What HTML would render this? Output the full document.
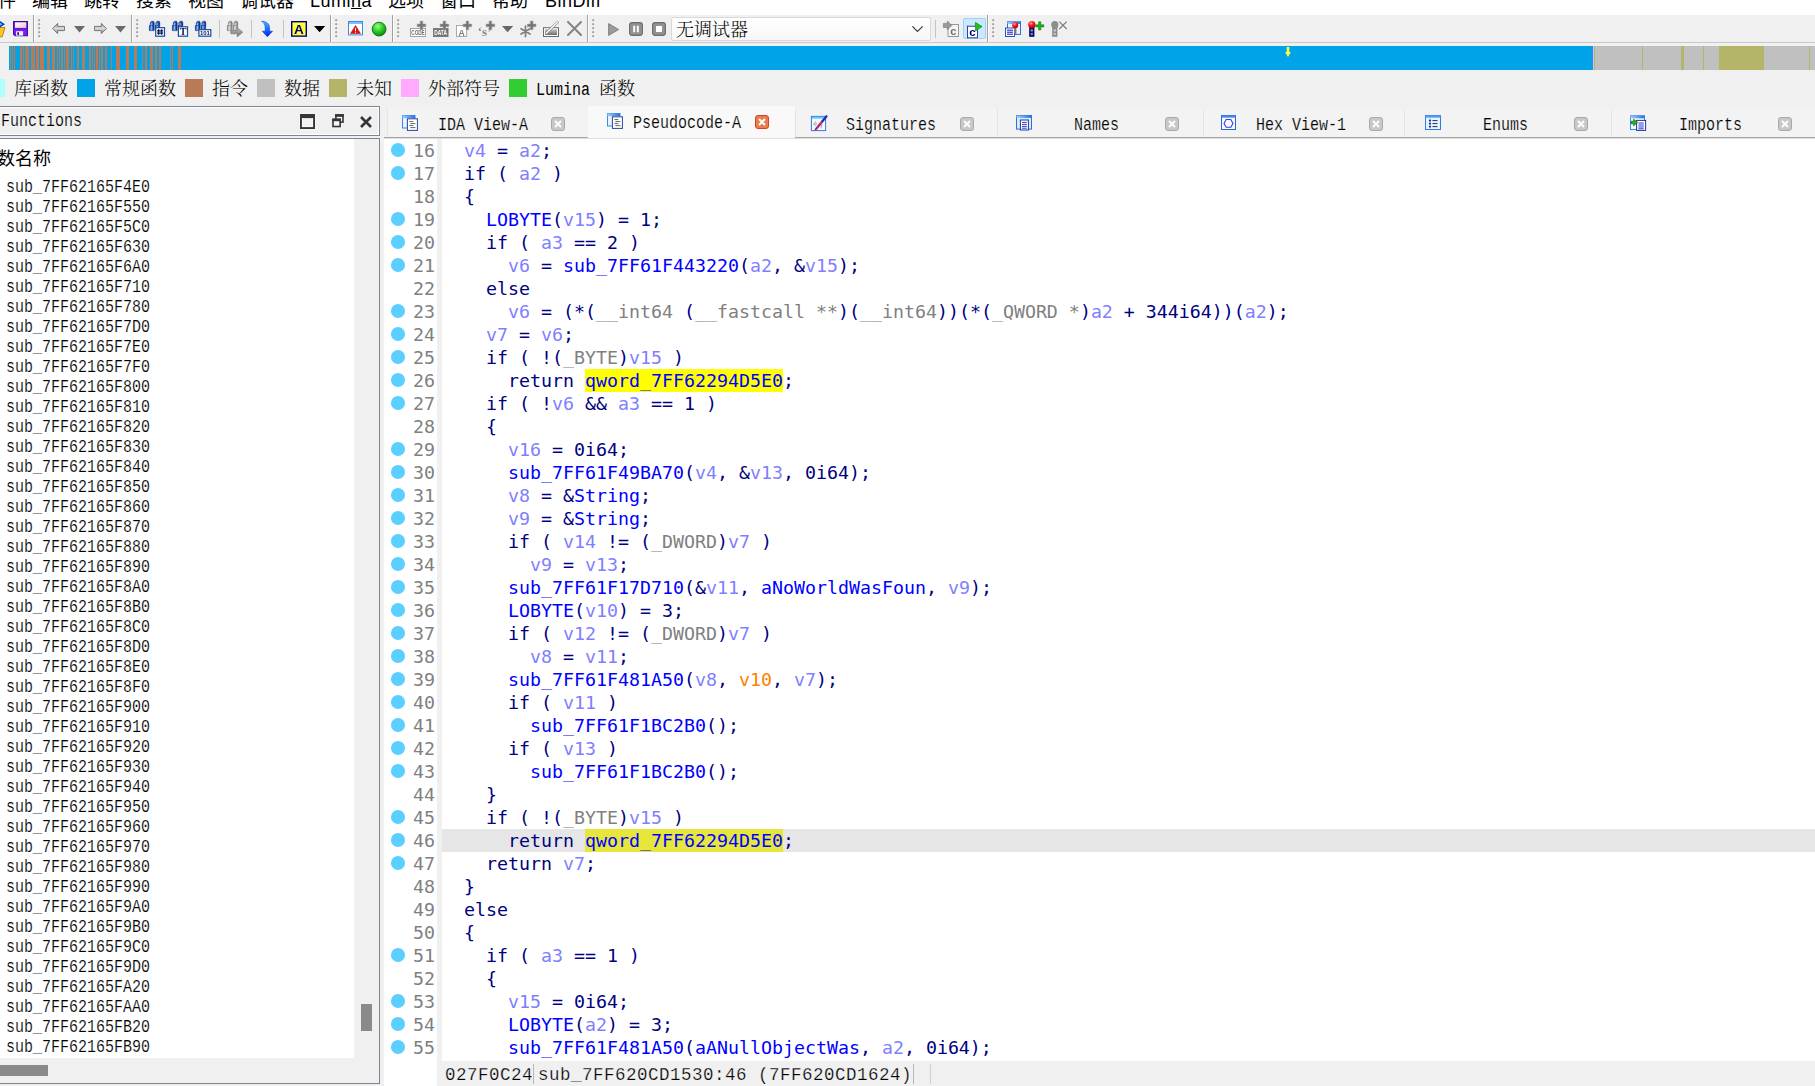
<!DOCTYPE html>
<html lang="zh-CN"><head><meta charset="utf-8"><title>IDA</title>
<style>
*{box-sizing:border-box;margin:0;padding:0}
html,body{width:1815px;height:1086px;overflow:hidden;background:#f0f0f0}
body{position:relative;font-family:"Liberation Mono","Noto Serif CJK SC",monospace;color:#000}
.abs{position:absolute}
/* menu */
#menu{position:absolute;left:0;top:0;width:1815px;height:15px;background:#fff;overflow:hidden}
#menu span.la{letter-spacing:.5px}
#menu span{position:absolute;top:-12px;font:18px/26px "Liberation Sans","Noto Sans CJK SC",sans-serif;white-space:nowrap;color:#000}
/* toolbar */
#tb{position:absolute;left:0;top:15px;width:1815px;height:28px;background:#f0f0f0}
.sepv{position:absolute;top:15px;width:1px;height:27px;background:#a0a0a0;box-shadow:1px 0 0 #fff}
.grip{position:absolute;top:19px;width:3px;height:19px;background:radial-gradient(circle at 1.3px 1.3px,#a9a9a9 0 1px,transparent 1.4px) 0 0/3px 4px repeat-y, radial-gradient(circle at 2px 2.2px,#fff 0 1px,transparent 1.4px) 0 0/3px 4px repeat-y}
.isep{position:absolute;top:20px;width:1px;height:18px;background:#c4c4c4}
svg{position:absolute;overflow:visible;will-change:transform}
/* nav */
#nav{position:absolute;left:8.5px;top:46px;width:1806.5px;height:24px;background:#00a2e8;overflow:hidden}
#nav span{position:absolute;top:0;height:24px;display:block}
/* legend */
.lg{position:absolute;top:79px;width:18px;height:18px}
.lt{position:absolute;top:78px;font:300 18px/24px "Liberation Mono","Noto Serif CJK SC",serif;white-space:nowrap;color:#000}
.sx{display:inline-block;transform:scaleX(.8333);transform-origin:0 50%;white-space:pre}
/* left panel */
#fh{position:absolute;left:-2px;top:106px;width:382px;height:30px;border:1px solid #7b8595;box-shadow:inset -1px -1px 0 #fff, inset 1px 1px 0 #fff;background:#f0f0f0}
#fl{position:absolute;left:-2px;top:138px;width:382px;height:946px;border:1px solid #7b8595;background:#fff;overflow:hidden}
.fn{-webkit-text-stroke:.18px #fff;position:absolute;left:6px;height:20px;font:18px/20px "Liberation Mono",monospace;white-space:pre;color:#000;transform:scaleX(.8333);transform-origin:0 50%}
/* tabs */
.tab{position:absolute;top:109px;height:28px;background:#f3f3f3;border-left:1px solid #e4e4e4}
.tab.act{top:106px;height:32px;background:#f9f9f9;border:0}
.tt{-webkit-text-stroke:.18px #f4f4f4;position:absolute;font:18px/22px "Liberation Mono",monospace;white-space:pre;color:#000;transform:scaleX(.8333);transform-origin:0 50%}
.cx{position:absolute;width:14px;height:14px;border-radius:3px;background:#c8c8c8;border:1px solid #a9a9a9}
.cx.red{background:#e67e50;border:1.5px solid #df3e24}
/* code */
#code{position:absolute;left:384px;top:138px;width:1431px;height:948px;background:#fff;overflow:hidden}
#gsep{position:absolute;left:437px;top:138px;width:5px;height:948px;background:#f0f0f0}
.ln{position:absolute;left:0;width:1815px;height:23px;font:18.27px/23px "DejaVu Sans Mono",monospace;white-space:pre}
.ln .d{position:absolute;left:391.4px;top:4.2px;width:14px;height:13.6px;border-radius:50%;background:#5bcfff;display:block}
.ln .n{position:absolute;left:413px;top:0;text-decoration:none;color:#808080}
.ln .c{position:absolute;left:442px;top:0;text-decoration:none;color:#000080}
.k{color:#000080}.f{color:#0000ff}.v{color:#8080ff}.t{color:#808080}.o{color:#ff8000}
.hl{background:#ffff00;padding:.9px 0}
.cur{background:#e6e6e6;left:442px !important;width:1373px !important}
/* status */
#st{position:absolute;left:442px;top:1061px;width:1373px;height:25px;background:#f0f0f0}
.stt{-webkit-text-stroke:.25px #f0f0f0;position:absolute;top:1063.5px;font:17.5px/22px "Liberation Mono",monospace;letter-spacing:.5px;white-space:pre;color:#000}
</style></head><body>
<div id="menu"><span style="left:-20px">文件</span><span style="left:32px">编辑</span><span style="left:84px">跳转</span><span style="left:136px">搜索</span><span style="left:188px">视图</span><span style="left:240px">调试器</span><span class="la" style="left:310px">Lumi<u>n</u>a</span><span style="left:388px">选项</span><span style="left:440px">窗口</span><span style="left:492px">帮助</span><span class="la" style="left:545px">BinDiff</span></div>
<div id="tb"></div><div class="abs" style="left:0;top:42px;width:1815px;height:1px;background:#c9c9c9"></div>
<div class="sepv" style="left:33px"></div><div class="sepv" style="left:131px"></div><div class="sepv" style="left:330px"></div><div class="sepv" style="left:392px"></div><div class="sepv" style="left:587px"></div><div class="sepv" style="left:987px"></div><div class="grip" style="left:38px"></div><div class="grip" style="left:136px"></div><div class="grip" style="left:335px"></div><div class="grip" style="left:397px"></div><div class="grip" style="left:592px"></div><div class="grip" style="left:992px"></div><div class="isep" style="left:219px"></div><div class="isep" style="left:251px"></div><div class="isep" style="left:283px"></div><div class="isep" style="left:935px"></div>
<svg width="0" height="0" style="left:0;top:0"><defs>
<linearGradient id="gArr" x1="0" y1="0" x2="0" y2="1"><stop offset="0" stop-color="#9a9a9a"/><stop offset=".5" stop-color="#dadada"/><stop offset="1" stop-color="#8a8a8a"/></linearGradient>
<linearGradient id="gBin" x1="0" y1="0" x2="1" y2="0"><stop offset="0" stop-color="#0a2a8a"/><stop offset=".4" stop-color="#7cc4ff"/><stop offset=".75" stop-color="#1c4fa8"/><stop offset="1" stop-color="#071d6a"/></linearGradient>
<linearGradient id="gBinG" x1="0" y1="0" x2="1" y2="0"><stop offset="0" stop-color="#8a8a8a"/><stop offset=".4" stop-color="#e0e0e0"/><stop offset=".75" stop-color="#a0a0a0"/><stop offset="1" stop-color="#7a7a7a"/></linearGradient>
<linearGradient id="gBlue" x1="0" y1="0" x2="0" y2="1"><stop offset="0" stop-color="#35c5ff"/><stop offset="1" stop-color="#0018ff"/></linearGradient>
<radialGradient id="gGreen" cx=".4" cy=".3" r=".7"><stop offset="0" stop-color="#9dff7a"/><stop offset=".5" stop-color="#2fd02f"/><stop offset="1" stop-color="#0c8a0c"/></radialGradient>
<radialGradient id="gRed" cx=".4" cy=".3" r=".7"><stop offset="0" stop-color="#ffb0a0"/><stop offset=".45" stop-color="#ff1a1a"/><stop offset="1" stop-color="#b00000"/></radialGradient>
<linearGradient id="gSave" x1="0" y1="0" x2="1" y2="1"><stop offset="0" stop-color="#fff"/><stop offset="1" stop-color="#ecc4c8"/></linearGradient>
<linearGradient id="gGray" x1="0" y1="0" x2="0" y2="1"><stop offset="0" stop-color="#c8c8c8"/><stop offset="1" stop-color="#6c6c6c"/></linearGradient>
<linearGradient id="gWin" x1="0" y1="0" x2="1" y2="0"><stop offset="0" stop-color="#9fd0ff"/><stop offset="1" stop-color="#2a6fe0"/></linearGradient>
</defs></svg>
<svg style="left:-11px;top:20px" width="16" height="17" viewBox="0 0 16 17"><path d="M1 7.5h15l-2.8 9.3H0z" fill="#f6c928" stroke="#b8860b" stroke-width="1"/><path d="M9.5 .8l5.2 3.4-5.2 3.4V5.6H5v-2.8h4.5z" fill="#28d8ff" stroke="#0b1fd0" stroke-width="1.3"/></svg>
<svg style="left:13px;top:21px" width="15" height="15.4" viewBox="0 0 15 15.4"><path d="M.6 .6h13.8v14.2H2.2L.6 13.2z" fill="#7a20f0" stroke="#3c0a9a" stroke-width="1.1"/><rect x="2" y="1.3" width="11.2" height="5.6" fill="url(#gSave)"/><rect x="1.2" y="7.4" width="12.6" height="1" fill="#5a10d0"/><rect x="3.1" y="10.2" width="7" height="4.4" fill="#f4f0ff"/><rect x="4.3" y="11.2" width="1.7" height="2.8" fill="#4a0aa0"/></svg>
<svg style="left:52px;top:23px" width="13" height="11" viewBox="0 0 13 11"><path d="M5.7 .4L.5 5.5l5.2 5.1V7.6h6.8V3.4H5.7z" fill="url(#gArr)" stroke="#6e6e6e" stroke-width=".9" stroke-linejoin="miter"/></svg>
<svg style="left:94px;top:23px" width="13" height="11" viewBox="0 0 13 11"><path d="M7.3 .4l5.2 5.1-5.2 5.1V7.6H.5V3.4h6.8z" fill="url(#gArr)" stroke="#6e6e6e" stroke-width=".9" stroke-linejoin="miter"/></svg>
<svg style="left:74px;top:26px" width="11" height="6.5" viewBox="0 0 11 6.5"><path d="M0 0h11L5.5 6.5z" fill="#6a6a6a"/></svg>
<svg style="left:115px;top:26px" width="11" height="6.5" viewBox="0 0 11 6.5"><path d="M0 0h11L5.5 6.5z" fill="#6a6a6a"/></svg>
<svg style="left:149px;top:21px" width="16.5" height="16" viewBox="0 0 16.5 16"><path d="M2.2 .3h2.5v1.3h.5v3h-.2v5h-4.6v-5h.9v-3h.9z" fill="url(#gBin)" stroke="#0a237a" stroke-width=".55"/><path d="M1.5 1.6h3.2M0.5 4.6h4.4" stroke="#0a237a" stroke-width=".5" opacity=".8"/><path d="M7.8 .3h2.5v1.3h.5v3h-.2v5h-4.6v-5h.9v-3h.9z" fill="url(#gBin)" stroke="#0a237a" stroke-width=".55"/><path d="M7.1 1.6h3.2M6.1 4.6h4.4" stroke="#0a237a" stroke-width=".5" opacity=".8"/><rect x="6.7" y="6.7" width="8.8" height="8.5" fill="#fff" stroke="#1c4a9a" stroke-width="1.2"/><path d="M9.6 8.2v5.6M12.6 8.2v5.6M8.1 9.8h6M8.1 12.2h6" stroke="#0a1a5a" stroke-width="1.3" fill="none"/></svg>
<svg style="left:172px;top:21px" width="16.5" height="16" viewBox="0 0 16.5 16"><path d="M2.2 .3h2.5v1.3h.5v3h-.2v5h-4.6v-5h.9v-3h.9z" fill="url(#gBin)" stroke="#0a237a" stroke-width=".55"/><path d="M1.5 1.6h3.2M0.5 4.6h4.4" stroke="#0a237a" stroke-width=".5" opacity=".8"/><path d="M7.8 .3h2.5v1.3h.5v3h-.2v5h-4.6v-5h.9v-3h.9z" fill="url(#gBin)" stroke="#0a237a" stroke-width=".55"/><path d="M7.1 1.6h3.2M6.1 4.6h4.4" stroke="#0a237a" stroke-width=".5" opacity=".8"/><rect x="6.4" y="5.8" width="9.1" height="9.4" fill="#fff" stroke="#1c4a9a" stroke-width="1.2"/><text x="11" y="14.2" font-family="Liberation Serif,serif" font-weight="bold" font-size="10" fill="#0a1a5a" text-anchor="middle">T</text></svg>
<svg style="left:195px;top:21px" width="16.5" height="16" viewBox="0 0 16.5 16"><path d="M2.2 .3h2.5v1.3h.5v3h-.2v5h-4.6v-5h.9v-3h.9z" fill="url(#gBin)" stroke="#0a237a" stroke-width=".55"/><path d="M1.5 1.6h3.2M0.5 4.6h4.4" stroke="#0a237a" stroke-width=".5" opacity=".8"/><path d="M7.8 .3h2.5v1.3h.5v3h-.2v5h-4.6v-5h.9v-3h.9z" fill="url(#gBin)" stroke="#0a237a" stroke-width=".55"/><path d="M7.1 1.6h3.2M6.1 4.6h4.4" stroke="#0a237a" stroke-width=".5" opacity=".8"/><rect x="3.9" y="8.7" width="11.9" height="6.5" fill="#fff" stroke="#1c4a9a" stroke-width="1.2"/><text x="9.9" y="14.2" font-family="Liberation Sans,sans-serif" font-weight="bold" font-size="6" fill="#0a1a5a" text-anchor="middle">101</text></svg>
<svg style="left:227px;top:21px" width="16.5" height="16" viewBox="0 0 16.5 16"><path d="M2.2 .3h2.5v1.3h.5v3h-.2v5h-4.6v-5h.9v-3h.9z" fill="url(#gBinG)" stroke="#6e6e6e" stroke-width=".55"/><path d="M1.5 1.6h3.2M0.5 4.6h4.4" stroke="#6e6e6e" stroke-width=".5" opacity=".8"/><path d="M7.8 .3h2.5v1.3h.5v3h-.2v5h-4.6v-5h.9v-3h.9z" fill="url(#gBinG)" stroke="#6e6e6e" stroke-width=".55"/><path d="M7.1 1.6h3.2M6.1 4.6h4.4" stroke="#6e6e6e" stroke-width=".5" opacity=".8"/><path d="M3.8 9.6h6.4V6.6l5.6 4.6-5.6 4.6v-3H3.8z" fill="url(#gGray)" stroke="#7c7c7c" stroke-width=".7"/></svg>
<svg style="left:261px;top:21px" width="12" height="16" viewBox="0 0 12 16"><path d="M.5 .3C5.5 .3 8.6 2.6 8.6 7v3.2h3L6.4 15.8 1.2 10.2h3V7C4.2 3.6 3 1.6.5 .3z" fill="url(#gBlue)" stroke="#0a2ad0" stroke-width=".5"/></svg>
<svg style="left:290.7px;top:21px" width="16" height="15.8" viewBox="0 0 16 15.8"><rect x=".7" y=".7" width="14.6" height="14.4" fill="#ffff3c" stroke="#00007e" stroke-width="1.4"/><text x="8" y="13" font-family="Liberation Sans,sans-serif" font-weight="bold" font-size="13.5" fill="#00007e" text-anchor="middle">A</text></svg>
<svg style="left:313.6px;top:26px" width="11.2" height="6.2" viewBox="0 0 11.2 6.2"><path d="M0 0h11.2L5.6 6.2z" fill="#000"/></svg>
<svg style="left:348px;top:21.3px" width="15" height="14.4" viewBox="0 0 15 14.4"><rect x=".5" y=".5" width="14" height="13.4" fill="#fff" stroke="#3c8ae8" stroke-width="1"/><rect x="1" y="1" width="13" height="2" fill="#7cc0ff"/><path d="M7.5 4.5l5 8h-10z" fill="#e01010" stroke="#a00000" stroke-width=".5"/><path d="M7.5 7v3M7.5 10.8v1" stroke="#fff" stroke-width="1.1"/></svg>
<svg style="left:371.8px;top:22px" width="14.2" height="14.2" viewBox="0 0 14.2 14.2"><circle cx="7.1" cy="7.1" r="6.9" fill="url(#gGreen)" stroke="#0a6a0a" stroke-width=".9"/></svg>
<svg style="left:410px;top:20px" width="16" height="17" viewBox="0 0 16 17"><rect x=".5" y="8.5" width="15" height="8" fill="#fff" stroke="#9a9a9a" stroke-width=".9"/><text x="8" y="15.3" font-family="Liberation Sans,sans-serif" font-weight="bold" font-size="6.6" fill="#6c6c6c" text-anchor="middle" textLength="13.4" lengthAdjust="spacingAndGlyphs">CODE</text><path d="M10.2 1.1h2.6v3h3v2.6h-3v3h-2.6v-3h-3v-2.6h3z" fill="#747474" stroke="#a0a0a0" stroke-width=".6"/></svg>
<svg style="left:433px;top:20px" width="16" height="17" viewBox="0 0 16 17"><rect x=".3" y="8.3" width="14.8" height="8.4" fill="#757575" stroke="#6a6a6a" stroke-width=".6"/><text x="7.6" y="15.2" font-family="Liberation Sans,sans-serif" font-weight="bold" font-size="6.6" fill="#fff" text-anchor="middle" textLength="12.6" lengthAdjust="spacingAndGlyphs">DATA</text><path d="M10.1 1.1h2.6v3h3v2.6h-3v3h-2.6v-3h-3v-2.6h3z" fill="#747474" stroke="#a0a0a0" stroke-width=".6"/></svg>
<svg style="left:456px;top:20px" width="17" height="17" viewBox="0 0 17 17"><rect x=".5" y="5.5" width="10.2" height="11" fill="#fff" stroke="#a2a2a2" stroke-width=".9"/><text x="5.6" y="15.6" font-family="Liberation Sans,sans-serif" font-weight="bold" font-size="8.6" fill="#7a7a7a" text-anchor="middle">A</text><path d="M10.1 1.1h2.6v3h3v2.6h-3v3h-2.6v-3h-3v-2.6h3z" fill="#747474" stroke="#a0a0a0" stroke-width=".6"/></svg>
<svg style="left:478px;top:20px" width="18" height="17" viewBox="0 0 18 17"><text x="6.6" y="16.4" font-family="Liberation Serif,serif" font-weight="bold" font-size="13" fill="#8a8a8a" text-anchor="middle">‘s’</text><path d="M11.1 1.1h2.6v3h3v2.6h-3v3h-2.6v-3h-3v-2.6h3z" fill="#747474" stroke="#a0a0a0" stroke-width=".6"/></svg>
<svg style="left:502px;top:26px" width="11.2" height="6.3" viewBox="0 0 11.2 6.3"><path d="M0 0h11.2L5.6 6.3z" fill="#66666c"/></svg>
<svg style="left:520px;top:20px" width="16" height="17" viewBox="0 0 16 17"><g stroke="#7e7e7e" stroke-width="1.7" stroke-linecap="round"><path d="M5.5 6.2v10.4M1 8.8l9 5.2M1 14l9-5.2"/></g><path d="M10.4 1.1h2.6v3h3v2.6h-3v3h-2.6v-3h-3v-2.6h3z" fill="#747474" stroke="#a0a0a0" stroke-width=".6"/></svg>
<svg style="left:543px;top:21px" width="16.5" height="16" viewBox="0 0 16.5 16"><rect x=".5" y="6.7" width="15" height="8.8" fill="#fff" stroke="#6a6a6a" stroke-width="1"/><rect x="2" y="8.2" width="12" height="5.8" fill="url(#gGray)"/><path d="M3.2 12.4L14.4 1.3" stroke="#8a8a8a" stroke-width="2.6" stroke-linecap="round"/><path d="M3.2 12.4L14.4 1.3" stroke="#fff" stroke-width="1.3" stroke-linecap="round"/></svg>
<svg style="left:567px;top:21px" width="15" height="15" viewBox="0 0 15 15"><path d="M1 1l13 13M14 1L1 14" stroke="#858585" stroke-width="2.1" stroke-linecap="round"/></svg>
<svg style="left:607.8px;top:23px" width="11" height="13" viewBox="0 0 11 13"><path d="M.6 .6l10 5.9-10 5.9z" fill="#9b9b9b" stroke="#7a7a7a" stroke-width=".9" stroke-linejoin="round"/></svg>
<svg style="left:629px;top:22px" width="14" height="14" viewBox="0 0 14 14"><rect x=".6" y=".6" width="12.8" height="12.8" rx="2.6" fill="#929292" stroke="#6c6c6c" stroke-width="1.1"/><path d="M5.2 3.8v6.4M8.8 3.8v6.4" stroke="#fff" stroke-width="1.9"/></svg>
<svg style="left:652px;top:22px" width="14" height="14" viewBox="0 0 14 14"><rect x=".6" y=".6" width="12.8" height="12.8" rx="2.6" fill="#929292" stroke="#6c6c6c" stroke-width="1.1"/><rect x="4" y="4" width="6" height="6" fill="#fff"/></svg>
<div class="abs" style="left:671px;top:17px;width:260px;height:24px;border:1px solid #d9d9d9;border-radius:2px;background:linear-gradient(#fff,#f7f7f7)"></div><div class="abs" style="left:676px;top:19.5px;font:300 18px/23px 'Liberation Mono','Noto Serif CJK SC',serif;white-space:nowrap">无调试器</div><svg style="left:912px;top:26px" width="11" height="6" viewBox="0 0 11 6"><path d="M.4 .4l5.1 5 5.1-5" fill="none" stroke="#3c3c3c" stroke-width="1.25"/></svg>
<svg style="left:943px;top:21px" width="16" height="16" viewBox="0 0 16 16"><rect x="5" y="3.5" width="10.5" height="12" fill="#f4f4f4" stroke="#8e8e8e" stroke-width=".9"/><text x="10.4" y="13.8" font-family="Liberation Sans,sans-serif" font-weight="bold" font-size="11" fill="#6f6f6f" text-anchor="middle">c</text><path d="M.4 2.4h4V0l4.4 4.4L4.4 8.8V6.4h-4z" fill="#9a9a9a" stroke="#707070" stroke-width=".6"/></svg>
<div class="abs" style="left:963px;top:18px;width:23px;height:21px;border:1px solid #99d1ff;border-radius:2px;background:#cce8ff"></div><svg style="left:967px;top:21.5px" width="16" height="16.5" viewBox="0 0 16 16.5"><rect x=".5" y="4.2" width="10" height="11.6" fill="#fff" stroke="#1c2e9a" stroke-width=".9"/><text x="5.4" y="14" font-family="Liberation Sans,sans-serif" font-weight="bold" font-size="11.5" fill="#00007e" text-anchor="middle">c</text><path d="M8.4 .3l6.8 4.3-6.8 4.3z" fill="#1fbf1f" stroke="#0a8a0a" stroke-width=".6"/></svg>
<svg style="left:1005px;top:21px" width="16" height="16" viewBox="0 0 16 16"><rect x="2.5" y=".8" width="13" height="12.6" fill="#eaf4ff" stroke="#2a6fe0" stroke-width="1"/><rect x="2.5" y=".8" width="13" height="2.2" fill="url(#gWin)"/><rect x=".5" y="7" width="9" height="8.5" fill="#fff" stroke="#1c3eb0" stroke-width=".9"/><path d="M2 9.2h6M2 11.2h6M2 13.2h6" stroke="#1010c0" stroke-width="1"/><rect x="9" y="6" width="2.4" height="7" fill="#7a7a7a"/><circle cx="10.2" cy="4.3" r="3" fill="url(#gRed)"/></svg>
<svg style="left:1028px;top:21px" width="16" height="16" viewBox="0 0 16 16"><rect x="1.2" y="6" width="5.2" height="9.8" fill="#00007a"/><circle cx="3.8" cy="9.4" r="1.3" fill="#8a8a8a"/><circle cx="3.8" cy="13" r="1.3" fill="#8a8a8a"/><circle cx="3.8" cy="3.7" r="3.6" fill="url(#gRed)"/><path d="M10.6 .8h2.2v3h3v2.2h-3v3h-2.2v-3h-3V3.8h3z" fill="#18b418" stroke="#0a6a0a" stroke-width=".5"/></svg>
<svg style="left:1051px;top:21px" width="16.5" height="16" viewBox="0 0 16.5 16"><rect x="1.2" y="6" width="5.2" height="9.8" fill="#8a8a8a"/><circle cx="3.8" cy="9.4" r="1.3" fill="#c4c4c4"/><circle cx="3.8" cy="13" r="1.3" fill="#c4c4c4"/><circle cx="3.8" cy="3.7" r="3.6" fill="#8e8e8e"/><path d="M8.3 .6l7.4 7.4M15.7 .6L8.3 8" stroke="#7a7a7a" stroke-width="1.1"/></svg>
<div id="nav"><span style="left:1.4px;width:1.1px;background:#b97a57"></span><span style="left:3.6px;width:0.8px;background:#b97a57"></span><span style="left:5.2px;width:1.1px;background:#b97a57"></span><span style="left:11.0px;width:0.9px;background:#b97a57"></span><span style="left:12.7px;width:0.9px;background:#b97a57"></span><span style="left:14.6px;width:0.8px;background:#b97a57"></span><span style="left:16.0px;width:0.8px;background:#b97a57"></span><span style="left:17.1px;width:3.7px;background:#b97a57"></span><span style="left:22.0px;width:4.0px;background:#b97a57"></span><span style="left:27.0px;width:3.0px;background:#b97a57"></span><span style="left:31.9px;width:4.0px;background:#b97a57"></span><span style="left:38.1px;width:3.7px;background:#b97a57"></span><span style="left:43.2px;width:3.6px;background:#b97a57"></span><span style="left:48.7px;width:0.8px;background:#b97a57"></span><span style="left:50.4px;width:0.8px;background:#b97a57"></span><span style="left:52.1px;width:0.8px;background:#b97a57"></span><span style="left:53.7px;width:0.9px;background:#b97a57"></span><span style="left:55.4px;width:0.8px;background:#b97a57"></span><span style="left:57.9px;width:3.0px;background:#b97a57"></span><span style="left:62.5px;width:0.9px;background:#b97a57"></span><span style="left:64.9px;width:1.1px;background:#b97a57"></span><span style="left:68.0px;width:2.9px;background:#b97a57"></span><span style="left:73.0px;width:3.0px;background:#b97a57"></span><span style="left:80.2px;width:0.9px;background:#b97a57"></span><span style="left:81.8px;width:0.8px;background:#b97a57"></span><span style="left:83.5px;width:0.9px;background:#b97a57"></span><span style="left:85.1px;width:0.6px;background:#b97a57"></span><span style="left:87.0px;width:2.0px;background:#b97a57"></span><span style="left:90.6px;width:0.8px;background:#b97a57"></span><span style="left:92.8px;width:2.2px;background:#b97a57"></span><span style="left:96.9px;width:2.0px;background:#b97a57"></span><span style="left:102.0px;width:1.9px;background:#b97a57"></span><span style="left:107.2px;width:4.7px;background:#b97a57"></span><span style="left:117.1px;width:3.9px;background:#b97a57"></span><span style="left:125.1px;width:3.7px;background:#b97a57"></span><span style="left:133.0px;width:1.9px;background:#b97a57"></span><span style="left:136.9px;width:2.0px;background:#b97a57"></span><span style="left:141.0px;width:3.1px;background:#b97a57"></span><span style="left:146.8px;width:2.2px;background:#b97a57"></span><span style="left:150.9px;width:2.0px;background:#b97a57"></span><span style="left:161.1px;width:1.1px;background:#b97a57"></span><span style="left:163.9px;width:1.1px;background:#b97a57"></span><span style="left:169.1px;width:3.9px;background:#b97a57"></span><span style="left:1584.5px;width:232px;background:#c0c0c0"></span><span style="left:1584.5px;width:1px;background:#ffaaff"></span><span style="left:1585.5px;width:1px;background:#b5b56a"></span><span style="left:1633.5px;width:1.0px;background:#b5b56a"></span><span style="left:1672.0px;width:3.5px;background:#b5b56a"></span><span style="left:1694.0px;width:1.0px;background:#b5b56a"></span><span style="left:1710.5px;width:45.0px;background:#b5b56a"></span><span style="left:1800.5px;width:1.0px;background:#b5b56a"></span></div><svg style="left:1284.5px;top:47px" width="6" height="10" viewBox="0 0 6 10"><path d="M1.7 0h2.6v5H6L3 10 0 5h1.7z" fill="#ffff40"/></svg>
<div class="lg" style="left:-13px;background:#b0ffff"></div><div class="lt" style="left:14px">库函数</div><div class="lg" style="left:77px;background:#00a2e8"></div><div class="lt" style="left:104px">常规函数</div><div class="lg" style="left:185px;background:#b97a57"></div><div class="lt" style="left:212px">指令</div><div class="lg" style="left:257px;background:#c0c0c0"></div><div class="lt" style="left:284px">数据</div><div class="lg" style="left:329px;background:#b5b56a"></div><div class="lt" style="left:356px">未知</div><div class="lg" style="left:401px;background:#ffaaff"></div><div class="lt" style="left:428px">外部符号</div><div class="lg" style="left:509px;background:#32cd32"></div><div class="lt" style="left:536px"><span class="sx">Lumina </span></div><div class="lt" style="left:599px">函数</div>
<div id="fh"></div><div class="tt" style="left:1px;top:110px">Functions</div><svg style="left:300px;top:114px" width="15" height="15" viewBox="0 0 15 15"><rect x="-.5" y="-.5" width="16" height="16" fill="#fff" opacity=".7"/><rect x="1" y="1" width="13" height="13" fill="#f2f2f2" stroke="#333538" stroke-width="2"/><rect x="0" y="0" width="15" height="4.4" fill="#333538"/><rect x="2.2" y="4.6" width="10.6" height="8.2" fill="none" stroke="#fff" stroke-width=".6"/></svg>
<svg style="left:332px;top:114px" width="12" height="13.5" viewBox="0 0 12 13.5"><rect x="3.9" y="1" width="7.1" height="7.1" fill="#f2f2f2" stroke="#333538" stroke-width="1.6"/><rect x="3.1" y=".2" width="8.7" height="2.6" fill="#333538"/><rect x="1" y="5.4" width="7.1" height="7.1" fill="#f8f8f8" stroke="#333538" stroke-width="1.6"/><rect x=".2" y="4.6" width="8.7" height="2.6" fill="#333538"/></svg>
<svg style="left:359.5px;top:115.5px" width="12" height="12" viewBox="0 0 12 12"><path d="M1 1l10 10M11 1L1 11" stroke="#333538" stroke-width="2.6"/></svg>
<div id="fl"><div class="abs" style="left:355px;top:0;width:25px;height:919px;background:#f0f0f0"></div><div class="abs" style="left:0;top:919px;width:380px;height:26px;background:#f0f0f0"></div><div class="abs" style="left:362px;top:865px;width:11px;height:27px;background:#8a8a8a"></div><div class="abs" style="left:0;top:926px;width:49px;height:11px;background:#8a8a8a"></div></div>
<div class="abs" style="left:-21px;top:146px;font:18px/26px 'Liberation Sans','Noto Sans CJK SC',sans-serif;white-space:nowrap">函数名称</div>
<div class="fn" style="top:177px">sub_7FF62165F4E0</div><div class="fn" style="top:197px">sub_7FF62165F550</div><div class="fn" style="top:217px">sub_7FF62165F5C0</div><div class="fn" style="top:237px">sub_7FF62165F630</div><div class="fn" style="top:257px">sub_7FF62165F6A0</div><div class="fn" style="top:277px">sub_7FF62165F710</div><div class="fn" style="top:297px">sub_7FF62165F780</div><div class="fn" style="top:317px">sub_7FF62165F7D0</div><div class="fn" style="top:337px">sub_7FF62165F7E0</div><div class="fn" style="top:357px">sub_7FF62165F7F0</div><div class="fn" style="top:377px">sub_7FF62165F800</div><div class="fn" style="top:397px">sub_7FF62165F810</div><div class="fn" style="top:417px">sub_7FF62165F820</div><div class="fn" style="top:437px">sub_7FF62165F830</div><div class="fn" style="top:457px">sub_7FF62165F840</div><div class="fn" style="top:477px">sub_7FF62165F850</div><div class="fn" style="top:497px">sub_7FF62165F860</div><div class="fn" style="top:517px">sub_7FF62165F870</div><div class="fn" style="top:537px">sub_7FF62165F880</div><div class="fn" style="top:557px">sub_7FF62165F890</div><div class="fn" style="top:577px">sub_7FF62165F8A0</div><div class="fn" style="top:597px">sub_7FF62165F8B0</div><div class="fn" style="top:617px">sub_7FF62165F8C0</div><div class="fn" style="top:637px">sub_7FF62165F8D0</div><div class="fn" style="top:657px">sub_7FF62165F8E0</div><div class="fn" style="top:677px">sub_7FF62165F8F0</div><div class="fn" style="top:697px">sub_7FF62165F900</div><div class="fn" style="top:717px">sub_7FF62165F910</div><div class="fn" style="top:737px">sub_7FF62165F920</div><div class="fn" style="top:757px">sub_7FF62165F930</div><div class="fn" style="top:777px">sub_7FF62165F940</div><div class="fn" style="top:797px">sub_7FF62165F950</div><div class="fn" style="top:817px">sub_7FF62165F960</div><div class="fn" style="top:837px">sub_7FF62165F970</div><div class="fn" style="top:857px">sub_7FF62165F980</div><div class="fn" style="top:877px">sub_7FF62165F990</div><div class="fn" style="top:897px">sub_7FF62165F9A0</div><div class="fn" style="top:917px">sub_7FF62165F9B0</div><div class="fn" style="top:937px">sub_7FF62165F9C0</div><div class="fn" style="top:957px">sub_7FF62165F9D0</div><div class="fn" style="top:977px">sub_7FF62165FA20</div><div class="fn" style="top:997px">sub_7FF62165FAA0</div><div class="fn" style="top:1017px">sub_7FF62165FB20</div><div class="fn" style="top:1037px">sub_7FF62165FB90</div>
<div class="abs" style="left:384px;top:137px;width:1431px;height:1px;background:#a6a6a6"></div><div class="abs" style="left:384px;top:138px;width:1431px;height:1px;background:#dedede;z-index:2"></div><div class="tab" style="left:386.5px;width:201px"></div><div class="tt" style="left:438px;top:114px">IDA View-A</div><div class="cx" style="left:551px;top:117px"></div><svg style="left:554px;top:120px" width="8" height="8" viewBox="0 0 8 8"><path d="M1 1l6 6M7 1L1 7" stroke="#fff" stroke-width="1.9"/></svg>
<svg style="left:402px;top:115px" width="16" height="16" viewBox="0 0 16 16"><rect x=".5" y=".5" width="12.5" height="12.5" fill="#e8f3ff" stroke="#3b8af0" stroke-width="1"/><rect x=".5" y=".5" width="12.5" height="2.6" fill="url(#gWin)"/><rect x="5.4" y="3.8" width="10" height="11.6" fill="#fff" stroke="#24489a" stroke-width="1"/><path d="M7.4 6.6h4M8.4 8.6h5M7.4 10.6h4M8.4 12.6h5" stroke="#555" stroke-width=".9"/></svg>
<div class="tab act" style="left:587.5px;width:207px"></div><div class="tt" style="left:633px;top:112px">Pseudocode-A</div><div class="cx red" style="left:755px;top:115px"></div><svg style="left:758px;top:118px" width="8" height="8" viewBox="0 0 8 8"><path d="M1 1l6 6M7 1L1 7" stroke="#fff" stroke-width="1.9"/></svg>
<svg style="left:607px;top:112.5px" width="16" height="16" viewBox="0 0 16 16"><rect x=".5" y=".5" width="12.5" height="12.5" fill="#e8f3ff" stroke="#3b8af0" stroke-width="1"/><rect x=".5" y=".5" width="12.5" height="2.6" fill="url(#gWin)"/><rect x="5.4" y="3.8" width="10" height="11.6" fill="#fff" stroke="#24489a" stroke-width="1"/><path d="M7.4 6.6h4M8.4 8.6h5M7.4 10.6h4M8.4 12.6h5" stroke="#555" stroke-width=".9"/></svg>
<div class="tab" style="left:794.5px;width:202.5px"></div><div class="tt" style="left:846px;top:114px">Signatures</div><div class="cx" style="left:959.5px;top:117px"></div><svg style="left:962.5px;top:120px" width="8" height="8" viewBox="0 0 8 8"><path d="M1 1l6 6M7 1L1 7" stroke="#fff" stroke-width="1.9"/></svg>
<svg style="left:810px;top:115px" width="17.5" height="16.5" viewBox="0 0 17.5 16.5"><rect x="1.4" y="1.4" width="14.2" height="14.2" fill="#f6fdff" stroke="#2f78e8" stroke-width="1"/><rect x="1.9" y="1.9" width="13.2" height="1.8" fill="#6ccaff"/><path d="M3.6 9.8c.2-3 2.6-3.4 2.6-1.2s-1.8 2.6-1.6.4M12 9l-1.2 4.5" fill="none" stroke="#8a8a8a" stroke-width=".8"/><path d="M5.2 13.6L11.4 6l1.5 1.2-6.2 7.6-1.9.6z" fill="#c4207c" stroke="#7a1050" stroke-width=".4"/><path d="M11.4 6l4.5-5.5c.8-.4 1.8.4 1.5 1.2L12.9 7.2z" fill="#2030b8" stroke="#101a80" stroke-width=".4"/></svg>
<div class="tab" style="left:997px;width:205.5px"></div><div class="tt" style="left:1073.5px;top:114px">Names</div><div class="cx" style="left:1165px;top:117px"></div><svg style="left:1168px;top:120px" width="8" height="8" viewBox="0 0 8 8"><path d="M1 1l6 6M7 1L1 7" stroke="#fff" stroke-width="1.9"/></svg>
<svg style="left:1016px;top:115px" width="16" height="16" viewBox="0 0 16 16"><rect x=".5" y=".5" width="15" height="13.6" fill="#d8ecff" stroke="#2f6ee0" stroke-width="1"/><rect x=".5" y=".5" width="15" height="2.4" fill="url(#gWin)"/><rect x="4.4" y="5" width="8" height="10" fill="#fff" stroke="#1c3a9a" stroke-width="1"/><path d="M6 7.4h4.8M6 9.4h4.8M6 11.4h4.8M6 13.2h4.8" stroke="#2020c0" stroke-width=".9"/></svg>
<div class="tab" style="left:1202.5px;width:201.5px"></div><div class="tt" style="left:1256px;top:114px">Hex View-1</div><div class="cx" style="left:1369px;top:117px"></div><svg style="left:1372px;top:120px" width="8" height="8" viewBox="0 0 8 8"><path d="M1 1l6 6M7 1L1 7" stroke="#fff" stroke-width="1.9"/></svg>
<svg style="left:1221px;top:115px" width="15" height="15" viewBox="0 0 15 15"><rect x=".5" y=".5" width="14" height="14" fill="#f6f9ff" stroke="#2f62d8" stroke-width="1"/><rect x=".5" y=".5" width="14" height="2.2" fill="#4a8cf0"/><path d="M3 8.4l2.2-3.9h4.6L12 8.4l-2.2 3.9H5.2z" fill="#fbfbff" stroke="#3a3ae0" stroke-width="1.1"/></svg>
<div class="tab" style="left:1404px;width:207px"></div><div class="tt" style="left:1483px;top:114px">Enums</div><div class="cx" style="left:1574px;top:117px"></div><svg style="left:1577px;top:120px" width="8" height="8" viewBox="0 0 8 8"><path d="M1 1l6 6M7 1L1 7" stroke="#fff" stroke-width="1.9"/></svg>
<svg style="left:1425px;top:115px" width="16" height="15" viewBox="0 0 16 15"><rect x=".5" y=".5" width="15" height="14" fill="#e4f6ff" stroke="#2f7ae8" stroke-width="1"/><rect x=".5" y=".5" width="15" height="2.2" fill="#5aa0f4"/><path d="M5 3v11" stroke="#9ac0f0" stroke-width=".7"/><path d="M5 4.3l1.3 1.3L5 6.9 3.7 5.6zM5 7.3l1.3 1.3L5 9.9 3.7 8.6zM5 10.3l1.3 1.3L5 12.9 3.7 11.6z" fill="#1a2ab0"/><path d="M7.5 5.6h5M7.5 8.6h5M7.5 11.6h5" stroke="#2a2a4a" stroke-width="1"/></svg>
<div class="tab" style="left:1611px;width:204px"></div><div class="tt" style="left:1679px;top:114px">Imports</div><div class="cx" style="left:1778px;top:117px"></div><svg style="left:1781px;top:120px" width="8" height="8" viewBox="0 0 8 8"><path d="M1 1l6 6M7 1L1 7" stroke="#fff" stroke-width="1.9"/></svg>
<svg style="left:1630px;top:115px" width="16.5" height="16" viewBox="0 0 16.5 16"><rect x=".5" y=".7" width="14" height="13.8" fill="#f2f8ff" stroke="#3b8af0" stroke-width="1"/><rect x=".5" y=".7" width="14" height="2.6" fill="url(#gWin)"/><rect x="6.6" y="5.4" width="9" height="10" fill="#fff" stroke="#1c3a8a" stroke-width="1"/><path d="M8.4 8h5.4M8.4 10h5.4M8.4 12h5.4M8.4 13.8h5.4" stroke="#2020c0" stroke-width=".9"/><path d="M1 6.3h2.6V4.2l4 3.3-4 3.3V8.7H1z" fill="#22b422" stroke="#0a5a0a" stroke-width=".6"/></svg>

<div id="code"></div><div id="gsep"></div>
<div class="ln" style="top:139px"><span class="d"></span><span class="n">16</span><span class="c">  <span class="v">v4</span> = <span class="v">a2</span>;</span></div>
<div class="ln" style="top:162px"><span class="d"></span><span class="n">17</span><span class="c">  if ( <span class="v">a2</span> )</span></div>
<div class="ln" style="top:185px"><span class="n">18</span><span class="c">  {</span></div>
<div class="ln" style="top:208px"><span class="d"></span><span class="n">19</span><span class="c">    <span class="f">LOBYTE</span>(<span class="v">v15</span>) = 1;</span></div>
<div class="ln" style="top:231px"><span class="d"></span><span class="n">20</span><span class="c">    if ( <span class="v">a3</span> == 2 )</span></div>
<div class="ln" style="top:254px"><span class="d"></span><span class="n">21</span><span class="c">      <span class="v">v6</span> = <span class="f">sub_7FF61F443220</span>(<span class="v">a2</span>, &amp;<span class="v">v15</span>);</span></div>
<div class="ln" style="top:277px"><span class="n">22</span><span class="c">    else</span></div>
<div class="ln" style="top:300px"><span class="d"></span><span class="n">23</span><span class="c">      <span class="v">v6</span> = (*(<span class="t">__int64</span> (<span class="t">__fastcall **</span>)(<span class="t">__int64</span>))(*(<span class="t">_QWORD *</span>)<span class="v">a2</span> + 344i64))(<span class="v">a2</span>);</span></div>
<div class="ln" style="top:323px"><span class="d"></span><span class="n">24</span><span class="c">    <span class="v">v7</span> = <span class="v">v6</span>;</span></div>
<div class="ln" style="top:346px"><span class="d"></span><span class="n">25</span><span class="c">    if ( !(<span class="t">_BYTE</span>)<span class="v">v15</span> )</span></div>
<div class="ln" style="top:369px"><span class="d"></span><span class="n">26</span><span class="c">      return <span class="f hl">qword_7FF62294D5E0</span>;</span></div>
<div class="ln" style="top:392px"><span class="d"></span><span class="n">27</span><span class="c">    if ( !<span class="v">v6</span> &amp;&amp; <span class="v">a3</span> == 1 )</span></div>
<div class="ln" style="top:415px"><span class="n">28</span><span class="c">    {</span></div>
<div class="ln" style="top:438px"><span class="d"></span><span class="n">29</span><span class="c">      <span class="v">v16</span> = 0i64;</span></div>
<div class="ln" style="top:461px"><span class="d"></span><span class="n">30</span><span class="c">      <span class="f">sub_7FF61F49BA70</span>(<span class="v">v4</span>, &amp;<span class="v">v13</span>, 0i64);</span></div>
<div class="ln" style="top:484px"><span class="d"></span><span class="n">31</span><span class="c">      <span class="v">v8</span> = &amp;<span class="f">String</span>;</span></div>
<div class="ln" style="top:507px"><span class="d"></span><span class="n">32</span><span class="c">      <span class="v">v9</span> = &amp;<span class="f">String</span>;</span></div>
<div class="ln" style="top:530px"><span class="d"></span><span class="n">33</span><span class="c">      if ( <span class="v">v14</span> != (<span class="t">_DWORD</span>)<span class="v">v7</span> )</span></div>
<div class="ln" style="top:553px"><span class="d"></span><span class="n">34</span><span class="c">        <span class="v">v9</span> = <span class="v">v13</span>;</span></div>
<div class="ln" style="top:576px"><span class="d"></span><span class="n">35</span><span class="c">      <span class="f">sub_7FF61F17D710</span>(&amp;<span class="v">v11</span>, <span class="f">aNoWorldWasFoun</span>, <span class="v">v9</span>);</span></div>
<div class="ln" style="top:599px"><span class="d"></span><span class="n">36</span><span class="c">      <span class="f">LOBYTE</span>(<span class="v">v10</span>) = 3;</span></div>
<div class="ln" style="top:622px"><span class="d"></span><span class="n">37</span><span class="c">      if ( <span class="v">v12</span> != (<span class="t">_DWORD</span>)<span class="v">v7</span> )</span></div>
<div class="ln" style="top:645px"><span class="d"></span><span class="n">38</span><span class="c">        <span class="v">v8</span> = <span class="v">v11</span>;</span></div>
<div class="ln" style="top:668px"><span class="d"></span><span class="n">39</span><span class="c">      <span class="f">sub_7FF61F481A50</span>(<span class="v">v8</span>, <span class="o">v10</span>, <span class="v">v7</span>);</span></div>
<div class="ln" style="top:691px"><span class="d"></span><span class="n">40</span><span class="c">      if ( <span class="v">v11</span> )</span></div>
<div class="ln" style="top:714px"><span class="d"></span><span class="n">41</span><span class="c">        <span class="f">sub_7FF61F1BC2B0</span>();</span></div>
<div class="ln" style="top:737px"><span class="d"></span><span class="n">42</span><span class="c">      if ( <span class="v">v13</span> )</span></div>
<div class="ln" style="top:760px"><span class="d"></span><span class="n">43</span><span class="c">        <span class="f">sub_7FF61F1BC2B0</span>();</span></div>
<div class="ln" style="top:783px"><span class="n">44</span><span class="c">    }</span></div>
<div class="ln" style="top:806px"><span class="d"></span><span class="n">45</span><span class="c">    if ( !(<span class="t">_BYTE</span>)<span class="v">v15</span> )</span></div>
<div class="ln" style="top:829px"><div class="abs cur" style="top:0;height:23px"></div><span class="d"></span><span class="n">46</span><span class="c">      return <span class="f hl" style="background:#e6e63c">qword_7FF62294D5E0</span>;</span></div>
<div class="ln" style="top:852px"><span class="d"></span><span class="n">47</span><span class="c">    return <span class="v">v7</span>;</span></div>
<div class="ln" style="top:875px"><span class="n">48</span><span class="c">  }</span></div>
<div class="ln" style="top:898px"><span class="n">49</span><span class="c">  else</span></div>
<div class="ln" style="top:921px"><span class="n">50</span><span class="c">  {</span></div>
<div class="ln" style="top:944px"><span class="d"></span><span class="n">51</span><span class="c">    if ( <span class="v">a3</span> == 1 )</span></div>
<div class="ln" style="top:967px"><span class="n">52</span><span class="c">    {</span></div>
<div class="ln" style="top:990px"><span class="d"></span><span class="n">53</span><span class="c">      <span class="v">v15</span> = 0i64;</span></div>
<div class="ln" style="top:1013px"><span class="d"></span><span class="n">54</span><span class="c">      <span class="f">LOBYTE</span>(<span class="v">a2</span>) = 3;</span></div>
<div class="ln" style="top:1036px"><span class="d"></span><span class="n">55</span><span class="c">      <span class="f">sub_7FF61F481A50</span>(<span class="f">aANullObjectWas</span>, <span class="v">a2</span>, 0i64);</span></div>
<div id="st"></div><div class="abs" style="left:533px;top:1064px;width:1px;height:20px;background:#b8b8b8"></div><div class="abs" style="left:913px;top:1064px;width:1px;height:20px;background:#b8b8b8"></div><div class="abs" style="left:930px;top:1064px;width:1px;height:20px;background:#d0d0d0"></div><div class="stt" style="left:445px">027F0C24</div><div class="stt" style="left:538px">sub_7FF620CD1530:46 (7FF620CD1624)</div>
</body></html>
